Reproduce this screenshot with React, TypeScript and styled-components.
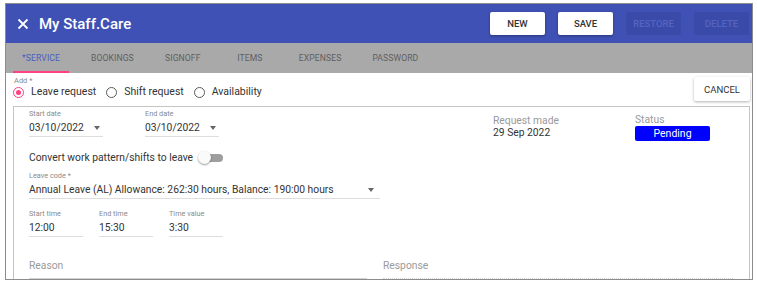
import styled, { createGlobalStyle } from 'styled-components'

const GlobalStyle = createGlobalStyle`
    body {
        margin: 0;
        background: #ffffff;
        font-family: Roboto, "Liberation Sans", Arial, sans-serif;
    }
`

const Frame = styled.div`
    margin: 3px 0 0 5px;
    width: 746px;
    height: 275px;
    border: 1px solid #8c8c8c;
    overflow: hidden;
    display: flex;
    flex-direction: column;
`

const Header = styled.div`
    height: 39px;
    flex: none;
    background: #3f51b5;
    display: flex;
    align-items: center;
    padding: 0 3px 0 11px;
`

const Title = styled.div`
    color: #ffffff;
    font-size: 15px;
    font-weight: 500;
    margin-left: 10px;
    flex: 1;
`

const HeaderButtons = styled.div`
    display: flex;
    gap: 13px;
`

const HeadButton = styled.button<{ $disabled?: boolean }>`
    width: 55px;
    height: 23px;
    border: none;
    border-radius: 2px;
    font-family: inherit;
    font-size: 9.5px;
    font-weight: 500;
    background: ${p => (p.$disabled ? '#3a4aa8' : '#ffffff')};
    color: ${p => (p.$disabled ? '#5565c2' : '#333333')};
    box-shadow: ${p => (p.$disabled ? 'none' : '0 1px 3px rgba(0,0,0,0.35)')};
    padding: 0;
`

const TabBar = styled.div`
    height: 30px;
    flex: none;
    background: #a9a9a9;
    display: flex;
    gap: 13px;
    padding-left: 7px;
`

const Tab = styled.div<{ $active?: boolean }>`
    padding: 2px 9px 0;
    min-width: 54px;
    box-sizing: border-box;
    display: flex;
    align-items: center;
    justify-content: center;
    font-size: 8.6px;
    letter-spacing: 0.1px;
    color: ${p => (p.$active ? '#4c5ec4' : '#5f5f5f')};
    border-bottom: 2px solid ${p => (p.$active ? '#ff4081' : 'transparent')};
`

const Content = styled.div`
    flex: 1;
    padding: 3px 2px 0 7px;
    display: flex;
    flex-direction: column;
`

const TopRow = styled.div`
    display: flex;
    align-items: flex-start;
`

const AddGroup = styled.div`
    flex: 1;
    display: flex;
    flex-direction: column;
`

const SmallLabel = styled.div`
    font-size: 7.5px;
    color: #8a8a8a;
    line-height: 8px;
    padding: 1px 0 0 1px;
`

const RadioRow = styled.div`
    display: flex;
    align-items: center;
    gap: 10px;
`

const RadioOption = styled.label`
    display: flex;
    align-items: center;
    gap: 7px;
    font-size: 10.5px;
    line-height: 14px;
    color: #333333;
`

const RadioCircle = styled.span<{ $checked?: boolean }>`
    width: 9px;
    height: 9px;
    border-radius: 50%;
    border: 1.5px solid ${p => (p.$checked ? '#ff4081' : '#5a5a5a')};
    display: flex;
    align-items: center;
    justify-content: center;
    &::after {
        content: '';
        width: 5px;
        height: 5px;
        border-radius: 50%;
        background: ${p => (p.$checked ? '#ff4081' : 'transparent')};
    }
`

const CancelButton = styled.button`
    width: 56px;
    height: 24px;
    margin-top: 1px;
    border: none;
    border-radius: 2px;
    background: #ffffff;
    box-shadow: 0 1px 3px rgba(0,0,0,0.3);
    font-family: inherit;
    font-size: 9.5px;
    color: #333333;
    padding: 0;
`

const Panel = styled.div`
    margin-top: 5px;
    flex: 1;
    border: 1px solid #c4c4c4;
    border-bottom: none;
    padding: 3px 0 0 15px;
    display: grid;
    grid-template-columns: 464px 142px 1fr;
    grid-template-rows: auto auto;
`

const LeftCol = styled.div`
    display: flex;
    flex-direction: column;
`

const FieldRow = styled.div<{ $gap: number; $top?: number }>`
    display: flex;
    gap: ${p => p.$gap}px;
    margin-top: ${p => p.$top ?? 0}px;
`

const Field = styled.div<{ $width: number }>`
    width: ${p => p.$width}px;
    border-bottom: 1px solid #dedede;
    display: flex;
    flex-direction: column;
`

const FieldLabel = styled.div`
    font-size: 7.3px;
    color: #8a8a8a;
    line-height: 8px;
`

const FieldValue = styled.div`
    font-size: 10.3px;
    color: #333333;
    line-height: 14px;
    padding: 3px 0 1px;
    display: flex;
    align-items: center;
    justify-content: space-between;
`

const Caret = styled.span<{ $right?: number }>`
    width: 0;
    height: 0;
    border-left: 3.5px solid transparent;
    border-right: 3.5px solid transparent;
    border-top: 4px solid #666666;
    margin-right: ${p => p.$right ?? 3}px;
`

const ConvertRow = styled.div`
    display: flex;
    align-items: center;
    gap: 5px;
    font-size: 10.3px;
    line-height: 14px;
    color: #333333;
    margin: 14px 0 7px;
`

const Toggle = styled.span`
    position: relative;
    width: 20px;
    height: 8px;
    border-radius: 4px;
    background: #9e9e9e;
    margin-left: 5px;
    &::after {
        content: '';
        position: absolute;
        left: -5px;
        top: -3px;
        width: 13px;
        height: 13px;
        border-radius: 50%;
        background: #fafafa;
        box-shadow: 0 1px 2px rgba(0,0,0,0.4);
    }
`

const InfoBlock = styled.div<{ $top: number }>`
    padding-top: ${p => p.$top}px;
    display: flex;
    flex-direction: column;
`

const InfoLabel = styled.div`
    font-size: 10.3px;
    color: #9a9a9a;
    line-height: 12px;
`

const InfoValue = styled.div`
    font-size: 10.3px;
    color: #333333;
    line-height: 12px;
`

const StatusBadge = styled.div`
    width: 75px;
    height: 15px;
    background: #0000ff;
    border-radius: 2px;
    color: #ffffff;
    font-size: 10.5px;
    line-height: 15px;
    text-align: center;
`

const BottomRow = styled.div`
    grid-column: 1 / -1;
    display: flex;
    gap: 16px;
    margin-top: 19px;
`

const TextArea = styled.div<{ $width: number; $dotted?: boolean }>`
    width: ${p => p.$width}px;
    font-size: 10.3px;
    line-height: 14px;
    color: #9a9a9a;
    padding-bottom: 2px;
    border-bottom: 1px ${p => (p.$dotted ? 'dotted' : 'solid')} #d4d4d4;
`

const CloseIcon = () => (
    <svg width="12" height="12" viewBox="0 0 12 12">
        <path d="M1.5 1.5 L10.5 10.5 M10.5 1.5 L1.5 10.5" stroke="#ffffff" strokeWidth="1.8" />
    </svg>
)

const tabs = ['*SERVICE', 'BOOKINGS', 'SIGNOFF', 'ITEMS', 'EXPENSES', 'PASSWORD']

const App = () => {
    return (
        <>
            <GlobalStyle />
            <Frame>
                <Header>
                    <CloseIcon />
                    <Title>My Staff.Care</Title>
                    <HeaderButtons>
                        <HeadButton>NEW</HeadButton>
                        <HeadButton>SAVE</HeadButton>
                        <HeadButton $disabled>RESTORE</HeadButton>
                        <HeadButton $disabled>DELETE</HeadButton>
                    </HeaderButtons>
                </Header>

                <TabBar>
                    {tabs.map((t, i) => (
                        <Tab key={t} $active={i === 0}>{t}</Tab>
                    ))}
                </TabBar>

                <Content>
                    <TopRow>
                        <AddGroup>
                            <SmallLabel>Add *</SmallLabel>
                            <RadioRow>
                                <RadioOption><RadioCircle $checked />Leave request</RadioOption>
                                <RadioOption><RadioCircle />Shift request</RadioOption>
                                <RadioOption><RadioCircle />Availability</RadioOption>
                            </RadioRow>
                        </AddGroup>
                        <CancelButton>CANCEL</CancelButton>
                    </TopRow>

                    <Panel>
                        <LeftCol>
                            <FieldRow $gap={42}>
                                <Field $width={74}>
                                    <FieldLabel>Start date</FieldLabel>
                                    <FieldValue>03/10/2022<Caret /></FieldValue>
                                </Field>
                                <Field $width={74}>
                                    <FieldLabel>End date</FieldLabel>
                                    <FieldValue>03/10/2022<Caret /></FieldValue>
                                </Field>
                            </FieldRow>

                            <ConvertRow>
                                Convert work pattern/shifts to leave
                                <Toggle />
                            </ConvertRow>

                            <Field $width={351}>
                                <FieldLabel>Leave code *</FieldLabel>
                                <FieldValue>
                                    Annual Leave (AL) Allowance: 262:30 hours, Balance: 190:00 hours
                                    <Caret $right={6} />
                                </FieldValue>
                            </Field>

                            <FieldRow $gap={16} $top={11}>
                                <Field $width={54}>
                                    <FieldLabel>Start time</FieldLabel>
                                    <FieldValue>12:00</FieldValue>
                                </Field>
                                <Field $width={54}>
                                    <FieldLabel>End time</FieldLabel>
                                    <FieldValue>15:30</FieldValue>
                                </Field>
                                <Field $width={54}>
                                    <FieldLabel>Time value</FieldLabel>
                                    <FieldValue>3:30</FieldValue>
                                </Field>
                            </FieldRow>
                        </LeftCol>

                        <InfoBlock $top={5}>
                            <InfoLabel>Request made</InfoLabel>
                            <InfoValue>29 Sep 2022</InfoValue>
                        </InfoBlock>

                        <InfoBlock $top={4}>
                            <InfoLabel>Status</InfoLabel>
                            <StatusBadge>Pending</StatusBadge>
                        </InfoBlock>

                        <BottomRow>
                            <TextArea $width={338}>Reason</TextArea>
                            <TextArea $width={350} $dotted>Response</TextArea>
                        </BottomRow>
                    </Panel>
                </Content>
            </Frame>
        </>
    )
}

export default App
